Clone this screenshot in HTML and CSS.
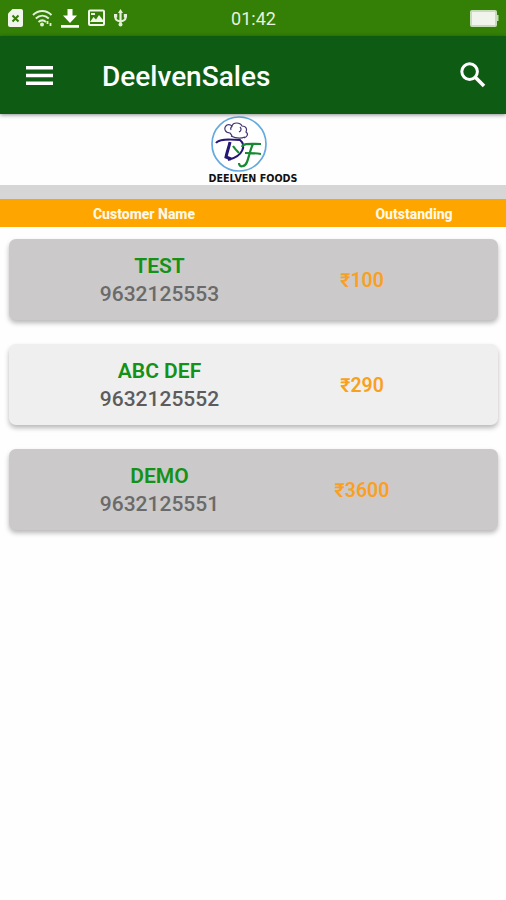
FILE: index.html
```html
<!DOCTYPE html>
<html lang="en">
  <head>
    <meta charset="UTF-8" />
    <meta name="viewport" content="width=device-width, initial-scale=1.0" />
    <title>DeelvenSales</title>
    <link rel="stylesheet" href="styles.css">
  </head>
  <body>
    <div class="status-bar">
      <div class="status-icons">
        <svg width="15" height="18" viewBox="0 0 15 18">
          <path d="M4.500 0H13a2 2 0 0 1 2 2v14a2 2 0 0 1-2 2H2a2 2 0 0 1-2-2V4.500z" fill="#f0f7ea" />
          <path d="M4.500 6.500l6 6M10.500 6.500l-6 6" stroke="#327d06" stroke-width="2" />
        </svg>
        <svg width="21" height="18" viewBox="0 0 21 18" fill="none" stroke="#e3efd9" stroke-width="2">
          <path d="M1 6c5.500-5.300 13-5.300 18.500 0M3.800 9.500c4-3.700 9-3.700 13 0M6.500 13c2.500-2.200 5-2.200 7.500 0" />
          <circle cx="10" cy="15.500" r="2" fill="#e3efd9" stroke="none" />
          <path d="M15.500 12v3M18.500 14v3" stroke-width="1.800" />
        </svg>
        <svg width="18" height="19" viewBox="0 0 18 19" fill="#ffffff">
          <path d="M6.500 0h5v6.500H16L9 14 2 6.500h4.500zM0 16h18v2.800H0z" />
        </svg>
        <svg width="17" height="18" viewBox="0 0 17 18">
          <rect x="1" y="1.500" width="15" height="14.500" rx="1" fill="none" stroke="#f0f7ea" stroke-width="2" />
          <path d="M2 13l3.500-5 2.500 2.500 3-4.500 4 5v2z" fill="#f0f7ea" />
          <path d="M3 5h4" stroke="#f0f7ea" stroke-width="2" />
        </svg>
        <svg width="15" height="18" viewBox="0 0 15 18" fill="none" stroke="#e3efd9" stroke-width="2.200">
          <path d="M7.500 2v13M2.500 6v3q0 2.500 5 3.500M12.500 6v3q0 2.500-5 3.500" />
          <path d="M7.500 0l2.500 4H5zM1 5h3.200v3.500H1zM10.800 5H14v3.500h-3.200z" fill="#e3efd9" stroke="none" />
          <circle cx="7.500" cy="15.500" r="2" fill="#e3efd9" stroke="none" />
        </svg>
      </div>
      <span class="clock">01:42</span>
      <svg class="battery" width="29" height="17" viewBox="0 0 29 17">
        <path d="M26 5h2.500v6H26z" fill="#c7ddb9" />
        <rect x="1" y="1" width="25" height="15" rx="1" fill="#f0f4ec" stroke="#c7ddb9" stroke-width="2" />
      </svg>
    </div>

    <div class="app-bar">
      <svg width="27" height="19" viewBox="0 0 27 19" fill="#ffffff">
        <path d="M0 0h27v3.500H0zM0 7.700h27v3.500H0zM0 15.400h27v3.500H0z" />
      </svg>
      <h1>DeelvenSales</h1>
      <svg class="search" width="26" height="26" viewBox="0 0 26 26" fill="none" stroke="#ffffff">
        <circle cx="9.600" cy="9.600" r="7.800" stroke-width="3" />
        <path d="M15.300 15.300l8.700 8.700" stroke-width="3.600" />
      </svg>
    </div>

    <div class="brand">
      <svg width="92" height="71" viewBox="0 0 92 71" fill="none">
        <circle cx="32" cy="30" r="27" fill="#ffffff" stroke="#65aade" stroke-width="1.700" />
        <!-- chef hat -->
        <path d="M25 23c0-2-1-3-2-4-5 0-7-5-3-8 2-1 4 0 5 1 1-4 8-4 10 0 5 0 5 4 4 6 3 2 1 5-2 6M25 12c-1 1-2 2-1 4M33 13c2 2 1 4-1 5M24 22c4 2 9 3 14 1" stroke="#41356f" stroke-width="1.200" />
        <!-- chef figure -->
        <path d="M9 29c3-4 11-4 24-3 6 5 4 16-12 20" stroke="#241775" stroke-width="2" />
        <path d="M23 28c-1 5-3 10-4 15l5 2" stroke="#241775" stroke-width="3" />
        <!-- leaf strokes -->
        <path d="M26 32c2 3 4 5 6 7M35 33c1-4 8-3 19-3M46 30c-3 6-4 13-6 18-2 5-8 6-8 1M38 39c5 0 10 0 16 1" stroke="#168a32" stroke-width="2.200" />
        <text x="1.500" y="68" class="brand-name" textLength="89" lengthAdjust="spacingAndGlyphs">DEELVEN FOODS</text>
      </svg>
    </div>

    <div class="table-head">
      <span>Customer Name</span>
      <span class="head-amount">Outstanding</span>
    </div>

    <div class="customers">
      <div class="card">
        <div class="customer">
          <h2>TEST</h2>
          <p>9632125553</p>
        </div>
        <span class="amount">₹100</span>
      </div>
      <div class="card light">
        <div class="customer">
          <h2>ABC DEF</h2>
          <p>9632125552</p>
        </div>
        <span class="amount">₹290</span>
      </div>
      <div class="card">
        <div class="customer">
          <h2>DEMO</h2>
          <p>9632125551</p>
        </div>
        <span class="amount">₹3600</span>
      </div>
    </div>
  </body>
</html>
```
FILE: styles.css
```css
* {
  box-sizing: border-box;
}

body {
  margin: 0;
  min-height: 100vh;
  background-color: #fefefe;
  font-family: Roboto, sans-serif;
}

h1,
h2,
p {
  margin: 0;
}

.status-bar {
  display: grid;
  grid-template-columns: 1fr auto 1fr;
  align-items: center;
  height: 36px;
  padding: 0 7px 0 8px;
  background-color: #347f06;
}

.status-icons {
  display: flex;
  align-items: center;
  gap: 8.5px;
}

.clock {
  color: #e8f2df;
  font-size: 18px;
  padding-top: 1px;
}

.battery {
  justify-self: end;
}

.app-bar {
  display: flex;
  align-items: center;
  position: relative;
  height: 78px;
  padding: 0 20px 0 26px;
  background-color: #0e5c13;
  box-shadow: 0 1px 4px rgba(0, 0, 0, 0.45);
}

.app-bar h1 {
  margin-left: 49px;
  padding-top: 2px;
  color: #ffffff;
  font-size: 28px;
  font-weight: 500;
}

.search {
  margin-left: auto;
}

.brand {
  display: flex;
  justify-content: center;
  height: 85px;
  border-bottom: 14px solid #d6d6d6;
}

.brand svg {
  overflow: visible;
}

.brand-name {
  fill: #111111;
  font-family: "DejaVu Sans", sans-serif;
  font-size: 10px;
  font-weight: bold;
}

.table-head {
  display: grid;
  grid-template-columns: 288px 1fr;
  align-items: center;
  height: 28px;
  background-color: #ffa500;
  color: #fff8e8;
  font-size: 14px;
  font-weight: 800;
  text-align: center;
  padding-top: 2px;
}

.head-amount {
  padding-left: 34px;
}

.customers {
  display: flex;
  flex-direction: column;
  gap: 24px;
  padding: 12px 8px 20px 9px;
}

.card {
  display: grid;
  grid-template-columns: 301px 104px;
  align-items: center;
  height: 81px;
  padding-top: 1px;
  border-radius: 7px;
  background-color: #cbc9c9;
  box-shadow: 0 3px 5px rgba(0, 0, 0, 0.28);
  text-align: center;
}

.light {
  background-color: #efefef;
}

.customer h2 {
  color: #149117;
  font-size: 21px;
  font-weight: 600;
  line-height: 28px;
}

.customer p {
  color: #6b6a6a;
  font-size: 21px;
  font-weight: 500;
  line-height: 29px;
}

.light p {
  color: #5c5c5c;
}

.amount {
  color: #f9a01f;
  font-size: 19.5px;
  font-weight: 600;
}
```
